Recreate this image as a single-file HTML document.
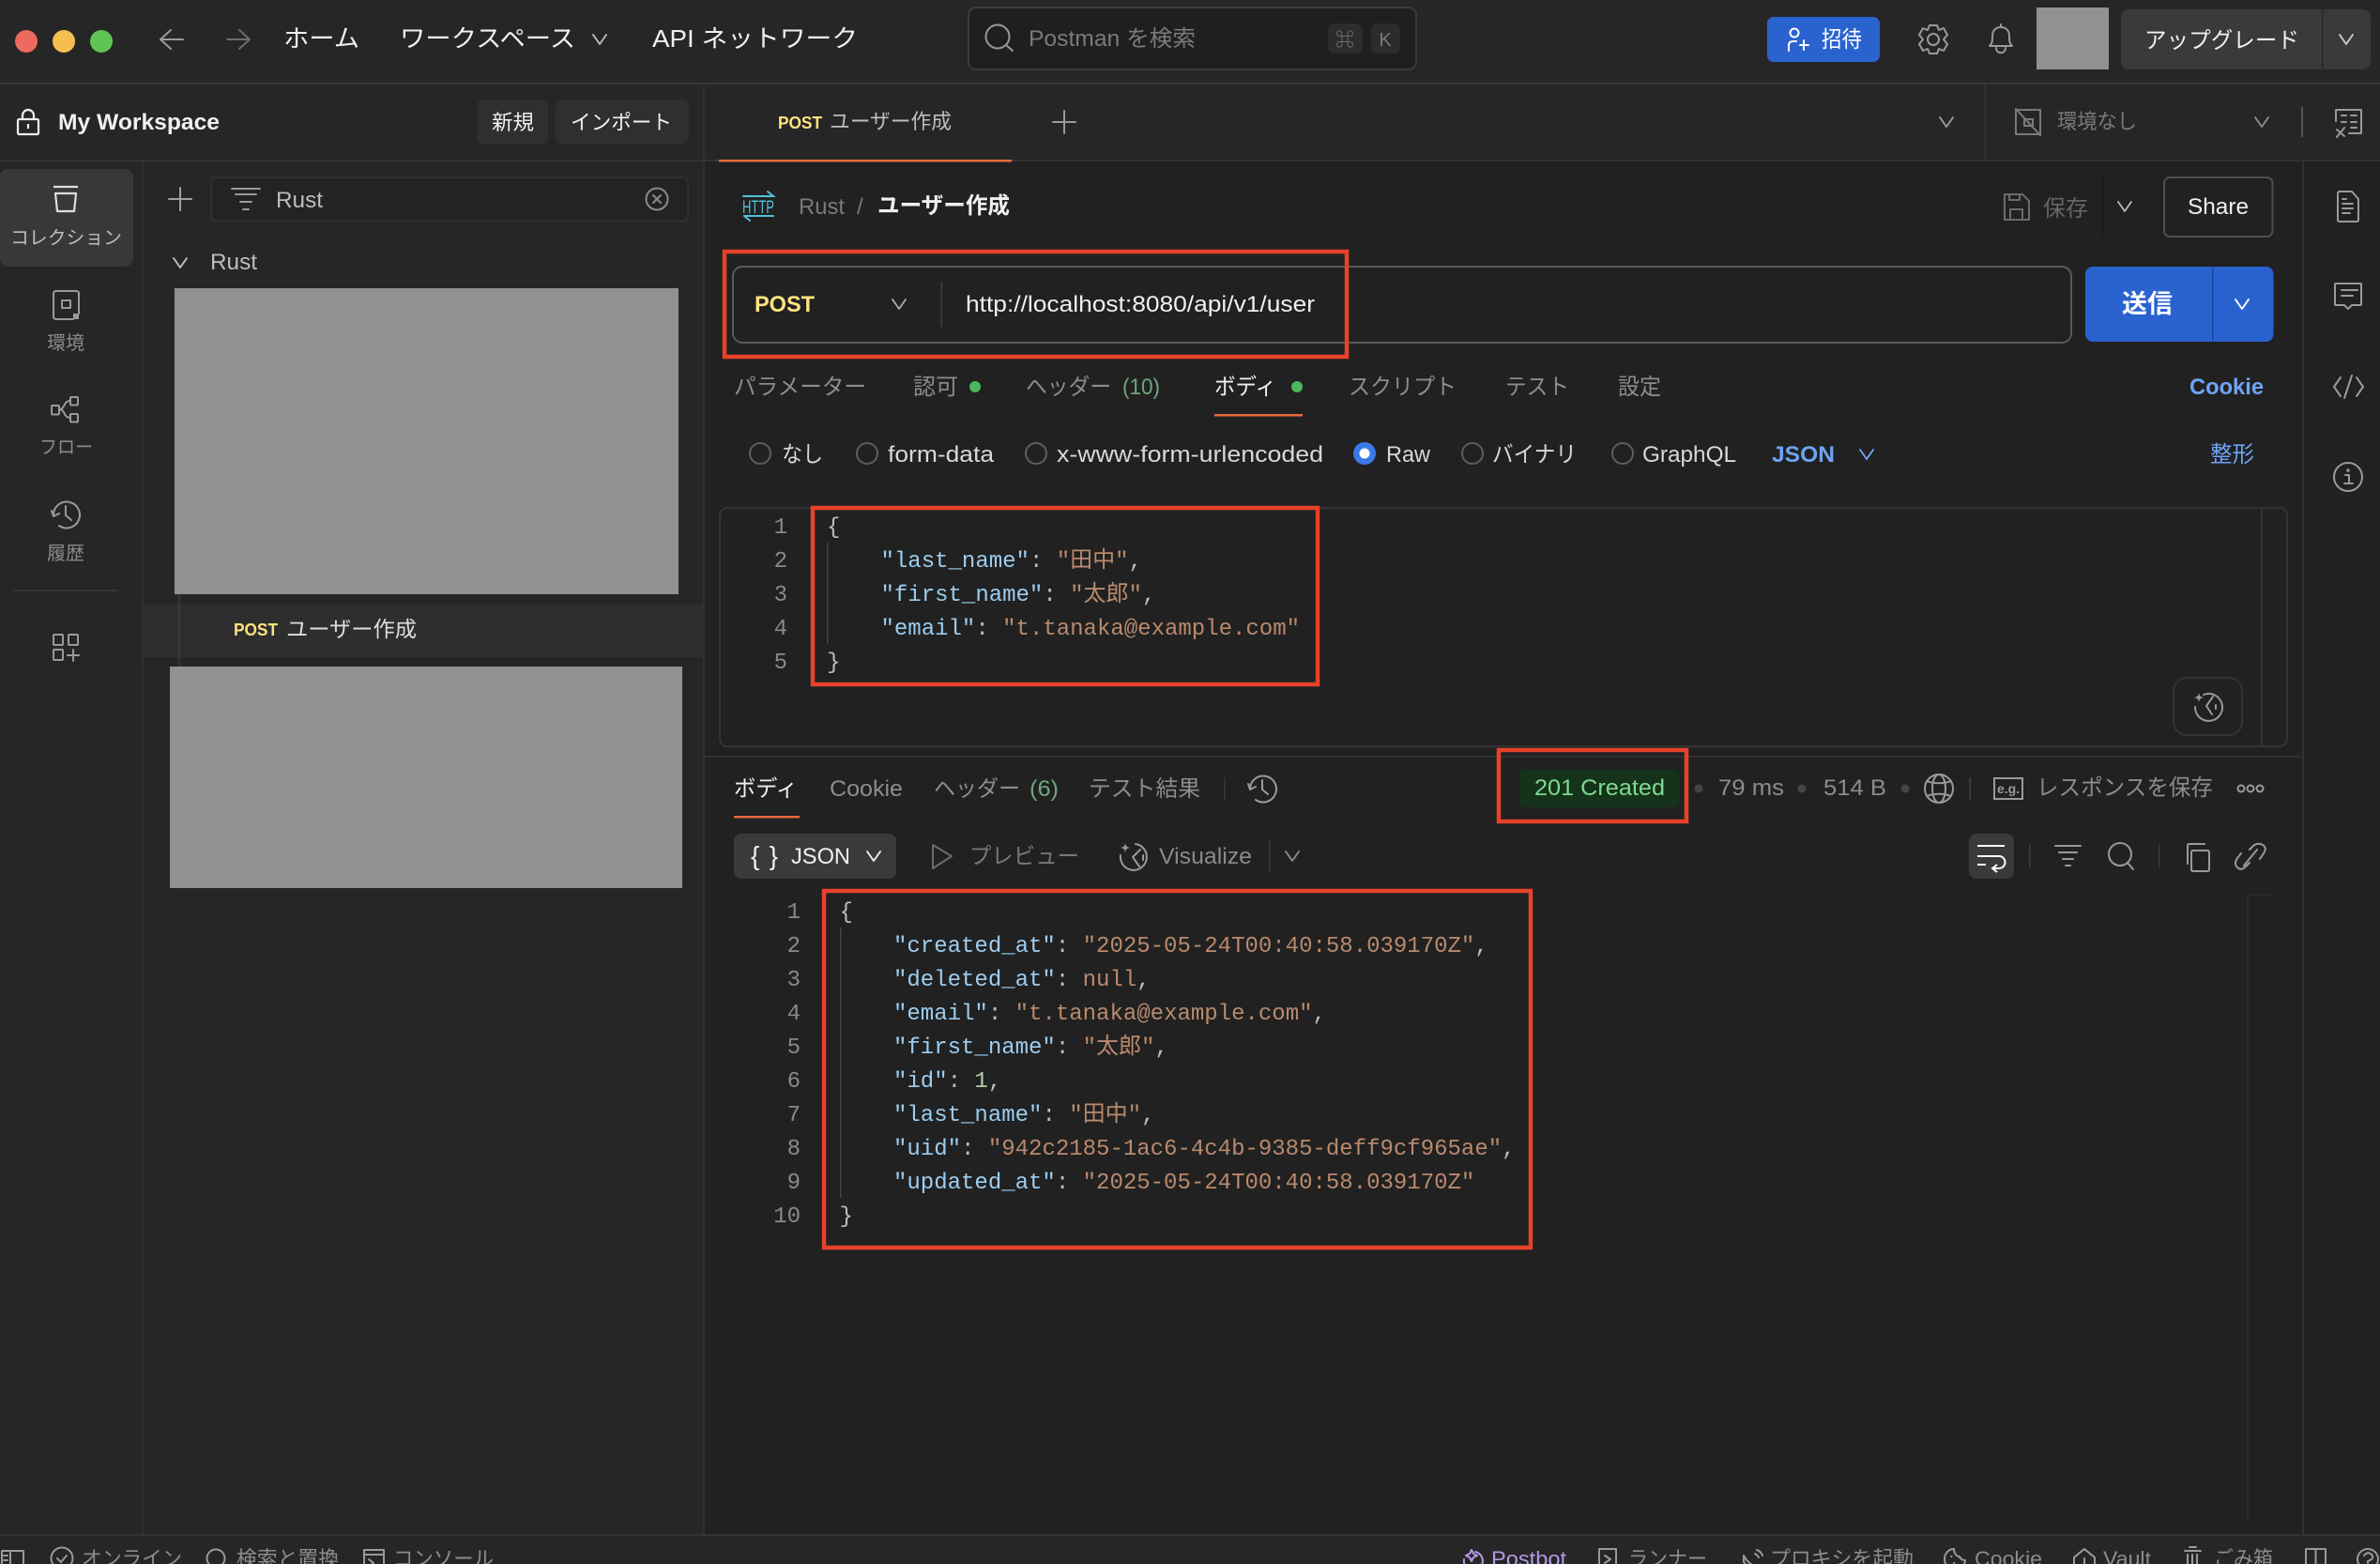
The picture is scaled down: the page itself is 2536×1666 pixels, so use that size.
<!DOCTYPE html>
<html lang="ja">
<head>
<meta charset="utf-8">
<title>Postman</title>
<style>
html,body{margin:0;padding:0;background:#212121;width:2536px;height:1666px;overflow:hidden}
svg{display:block}
text{font-family:"Liberation Sans","Noto Sans CJK JP",sans-serif;font-size:24px;fill:#8c8c8c;white-space:pre}
.w{fill:#f0f0f0}
.b{font-weight:700}
.y{fill:#ffe47e;font-weight:700}
.bl{fill:#6ea4f5;font-weight:700}
.gr{fill:#6fa67e}
.d{fill:#7a7a7a}
.m{font-family:"Liberation Mono","Noto Sans CJK JP",monospace}
.k{fill:#9ccdf0}
.s{fill:#b98a6d}
.p{fill:#bdbdbd}
.n{fill:#8a8a8a}
.i{fill:none;stroke:#9a9a9a;stroke-width:2;stroke-linecap:round;stroke-linejoin:round}
.i2{fill:none;stroke:#6c6c6c;stroke-width:2;stroke-linecap:round;stroke-linejoin:round}
.red{fill:none;stroke:#e8412a;stroke-width:4.5}
</style>
</head>
<body>
<svg xmlns="http://www.w3.org/2000/svg" width="2536" height="1666" viewBox="0 0 2536 1666">
<defs><path id="c" d="M-7-5L0 5L7-5" fill="none" stroke-width="1.9" stroke-linecap="round" stroke-linejoin="round"/></defs>

<!-- backgrounds -->
<rect width="2536" height="1666" fill="#212121"/>
<rect width="2536" height="172" fill="#262626"/>
<rect x="0" y="172" width="750" height="1462" fill="#262626"/>
<rect x="0" y="1634" width="2536" height="32" fill="#262626"/>
<rect y="88" width="2536" height="2" fill="#383838"/>
<rect y="170" width="2536" height="2" fill="#333"/>
<rect x="749" y="90" width="2" height="1544" fill="#303030"/>
<rect x="151" y="172" width="2" height="1462" fill="#2f2f2f"/>
<rect x="2453" y="172" width="2" height="1462" fill="#303030"/>
<rect y="1634" width="2536" height="2" fill="#333"/>

<!-- title bar -->
<circle cx="28" cy="44" r="12" fill="#ed6a5e"/>
<circle cx="68" cy="44" r="12" fill="#f5bf4f"/>
<circle cx="108" cy="44" r="12" fill="#61c554"/>
<path class="i" d="M171 42H195M182 32L171 42L182 52"/>
<path class="i2" d="M242 42H266M255 32L266 42L255 52"/>
<text class="w" x="302" y="50" style="font-size:26px" textLength="81" lengthAdjust="spacingAndGlyphs">ホーム</text>
<text class="w" x="426" y="50" style="font-size:26px" textLength="187" lengthAdjust="spacingAndGlyphs">ワークスペース</text>
<use href="#c" x="639" y="42" stroke="#bbb"/>
<text class="w" x="695" y="50" style="font-size:26px" textLength="219" lengthAdjust="spacingAndGlyphs">API ネットワーク</text>

<rect x="1032" y="8" width="477" height="66" rx="8" fill="#1f1f1f" stroke="#3b3b3b" stroke-width="2"/>
<circle cx="1063" cy="39" r="12.5" class="i"/>
<path class="i" d="M1072 48L1079 54"/>
<text x="1096" y="49" textLength="178" lengthAdjust="spacingAndGlyphs" class="d">Postman を検索</text>
<rect x="1415" y="25" width="37" height="32" rx="7" fill="#2c2c2c"/>
<rect x="1461" y="25" width="31" height="32" rx="7" fill="#2c2c2c"/>
<text x="1433" y="49" text-anchor="middle" class="d" style="font-size:20px">⌘</text>
<text x="1476" y="49" text-anchor="middle" class="d" style="font-size:20px">K</text>

<rect x="1883" y="18" width="120" height="48" rx="7" fill="#2a63d0"/>
<g fill="none" stroke="#fff" stroke-width="2" stroke-linecap="round"><circle cx="1912" cy="35" r="4.500"/><path d="M1906 54V48q0-4 5-4h3M1918 48h9M1922 43v10"/></g>
<text x="1941" y="50" style="fill:#fff" textLength="43" lengthAdjust="spacingAndGlyphs">招待</text>
<g class="i"><circle cx="2060" cy="42" r="6"/><path d="M2056 27h8l2 5 5-2 4 7-4 5 4 5-4 7-5-2-2 5h-8l-2-5-5 2-4-7 4-5-4-5 4-7 5 2z"/></g>
<path class="i" d="M2120 49c3-3 3-6 3-10 0-6 3-10 9-10s9 4 9 10c0 4 0 7 3 10zM2132 29v-3M2127 51c0 7 10 7 10 0"/>
<rect x="2170" y="8" width="77" height="66" fill="#919191"/>
<rect x="2260" y="10" width="266" height="64" rx="8" fill="#3a3a3a"/>
<rect x="2474" y="10" width="1.500" height="64" fill="#262626"/>
<text class="w" x="2285" y="51" textLength="165" lengthAdjust="spacingAndGlyphs">アップグレード</text>
<use href="#c" x="2500" y="42" stroke="#ccc"/>

<!-- workspace row -->
<g fill="none" stroke="#eee" stroke-width="2.200" stroke-linejoin="round"><rect x="19" y="127" width="22" height="16" rx="1.500"/><path d="M24 127v-4a6 6 0 0 1 12 0v4M30 132v5"/></g>
<text class="w b" x="62" y="138" textLength="172" lengthAdjust="spacingAndGlyphs">My Workspace</text>
<rect x="508" y="106" width="76" height="48" rx="8" fill="#2f2f2f"/>
<rect x="592" y="106" width="142" height="48" rx="8" fill="#2f2f2f"/>
<text class="w" x="524" y="138" style="font-size:22px" textLength="45" lengthAdjust="spacingAndGlyphs">新規</text>
<text class="w" x="608" y="138" style="font-size:22px" textLength="108" lengthAdjust="spacingAndGlyphs">インポート</text>

<!-- tabs row -->
<rect x="766" y="170" width="312" height="2.500" fill="#e8693f"/>
<text class="y" x="829" y="137" style="font-size:18px" textLength="47" lengthAdjust="spacingAndGlyphs">POST</text>
<text x="884" y="137" class="p" style="font-size:22px" textLength="130" lengthAdjust="spacingAndGlyphs">ユーザー作成</text>
<path class="i" d="M1134 118V142M1122 130H1146"/>
<use href="#c" x="2074" y="130" stroke="#9a9a9a"/>
<rect x="2114" y="90" width="2" height="80" fill="#303030"/>
<path class="i2" d="M2148 117h26v26h-26zM2148 116L2174 144" style="stroke:#7a7a7a"/><rect x="2157" y="127" width="9" height="7" fill="none" stroke="#7a7a7a" stroke-width="2"/>
<text x="2192" y="137" class="d" style="font-size:22px" textLength="85" lengthAdjust="spacingAndGlyphs">環境なし</text>
<use href="#c" x="2410" y="130" stroke="#8a8a8a"/>
<rect x="2452" y="114" width="2" height="32" fill="#555"/>
<path class="i" d="M2489 129V117h27v25h-13M2495 123h5M2505 123h6M2495 130h5M2505 130h6M2505 136h6M2490 138l8 7M2498 136l-8 10"/>

<!-- sidebar nav -->
<rect x="0" y="180" width="142" height="104" rx="9" fill="#383838"/>
<path d="M57 199H83M59 206L61 225H79L81 206Z" fill="none" stroke="#ddd" stroke-width="2.200" stroke-linejoin="round"/>
<text x="11" y="260" class="p" style="font-size:20px" textLength="119" lengthAdjust="spacingAndGlyphs">コレクション</text>
<path class="i" d="M78 340H60q-3 0-3-3V313q0-3 3-3h21q3 0 3 3v21"/><rect class="i" x="66" y="320" width="9" height="8"/><rect x="78" y="334" width="6" height="6" fill="#9a9a9a"/>
<text x="70" y="372" text-anchor="middle" class="n" style="font-size:20px">環境</text>
<g class="i"><rect x="55" y="432" width="8" height="9.500" rx="1"/><rect x="75" y="423" width="8" height="8.500" rx="1"/><rect x="75" y="441" width="8" height="8.500" rx="1"/><path d="M63 436c7 0 4-9 12-9M63 436c7 0 4 9 12 9"/></g>
<text x="42" y="483" class="n" style="font-size:20px" textLength="57" lengthAdjust="spacingAndGlyphs">フロー</text>
<g class="i"><path d="M57 549A14 14 0 1 1 63 560"/><path d="M55 544l2 6 6-3M70 539v10l6 5"/></g>
<text x="70" y="596" text-anchor="middle" class="n" style="font-size:20px">履歴</text>
<rect x="14" y="628" width="112" height="2" fill="#333"/>
<g class="i"><rect x="57" y="676" width="10" height="11" rx="1"/><rect x="73" y="676" width="10" height="11" rx="1"/><rect x="57" y="692" width="10" height="11" rx="1"/><path d="M72 698h12M78 692v12"/></g>

<!-- sidebar tree -->
<path class="i" d="M192 200V224M180 212H204" style="stroke:#a0a0a0"/>
<rect x="225" y="189" width="508" height="46" rx="4" fill="#232323" stroke="#303030" stroke-width="2"/>
<path class="i" d="M247 201H277M251 207H273M256 215H268M259 223H265"/>
<text x="294" y="221" class="p" textLength="50" lengthAdjust="spacingAndGlyphs">Rust</text>
<circle class="i" cx="700" cy="212" r="11.500" style="stroke:#8a8a8a"/><path class="i" d="M696 208L704 216M704 208L696 216" style="stroke:#8a8a8a"/>
<use href="#c" x="192" y="280" stroke="#c0c0c0"/>
<text x="224" y="287" class="p" textLength="50" lengthAdjust="spacingAndGlyphs">Rust</text>
<rect x="186" y="307" width="537" height="326" fill="#919191"/>
<rect x="190" y="633" width="1.500" height="80" fill="#3a3a3a"/>
<rect x="153" y="644" width="596" height="56" fill="#2e2e2e"/>
<rect x="190" y="644" width="1.500" height="56" fill="#3d3d3d"/>
<text class="y" x="249" y="677" style="font-size:18px" textLength="47" lengthAdjust="spacingAndGlyphs">POST</text>
<text x="305" y="678" style="fill:#dedede;font-size:23px" textLength="139" lengthAdjust="spacingAndGlyphs">ユーザー作成</text>
<rect x="181" y="710" width="546" height="236" fill="#919191"/>

<!-- breadcrumb -->
<g fill="none" stroke="#4fc3d9" stroke-width="2" stroke-linecap="round"><path d="M792 209H824L818 204M793 230H824M793 230l6 5"/></g>
<text x="791" y="227" style="fill:#4fc3d9;font-size:19px" textLength="34" lengthAdjust="spacingAndGlyphs">HTTP</text>
<text x="851" y="228" class="d" textLength="49" lengthAdjust="spacingAndGlyphs">Rust</text>
<text x="913" y="228" class="d">/</text>
<text class="w b" x="935" y="227" textLength="141" lengthAdjust="spacingAndGlyphs">ユーザー作成</text>
<g class="i2"><path d="M2136 207h19l7 7v20h-26zM2141 207v6h11v-6M2142 234v-11h13v11"/></g>
<text x="2177" y="230" style="fill:#666" textLength="48" lengthAdjust="spacingAndGlyphs">保存</text>
<rect x="2240" y="188" width="1.500" height="64" fill="#1a1a1a"/>
<use href="#c" x="2264" y="220" stroke="#b5b5b5"/>
<rect x="2306" y="189" width="115.500" height="63" rx="6" fill="none" stroke="#4f4f4f" stroke-width="2"/>
<text class="w" x="2331" y="228" textLength="65" lengthAdjust="spacingAndGlyphs">Share</text>
<path class="i" d="M2493 204h13l7 8v22q0 2-2 2h-18q-2 0-2-2v-28q0-2 2-2zM2496 212h4M2496 217h11M2496 222h11M2496 227h8"/>
<path class="i" d="M2489 302h26q1 0 1 1v21q0 1-1 1h-9l-4 4-4-4h-9q-1 0-1-1v-21q0-1 1-1zM2495 309h17M2495 315h12"/>
<path class="i" d="M2494 402l-7 10 7 10M2511 402l7 10-7 10M2506 400l-8 24"/>
<circle class="i" cx="2502" cy="508" r="15"/><path class="i" d="M2499 506h4v8M2498 515h9"/><circle cx="2502" cy="501" r="1.800" fill="#9a9a9a"/>

<!-- URL bar -->
<rect x="781" y="284" width="1426" height="81" rx="10" fill="none" stroke="#5a5a5a" stroke-width="2"/>
<text class="y" x="804" y="332" textLength="64" lengthAdjust="spacingAndGlyphs">POST</text>
<use href="#c" x="958" y="324" stroke="#a8a8a8"/>
<rect x="1002.500" y="300" width="1.500" height="48" fill="#3f3f3f"/>
<text class="w" x="1029" y="332" textLength="372" lengthAdjust="spacingAndGlyphs">http://localhost:8080/api/v1/user</text>
<rect x="2222" y="284" width="200.500" height="80" rx="8" fill="#2a63d0"/>
<rect x="2357" y="284" width="1.500" height="80" fill="#1d4494"/>
<text x="2288" y="333" text-anchor="middle" style="fill:#fff;font-size:27px;font-weight:700">送信</text>
<use href="#c" x="2389" y="324" stroke="#fff"/>

<!-- request tabs -->
<text x="782" y="420" textLength="141" lengthAdjust="spacingAndGlyphs">パラメーター</text>
<text x="973" y="420" textLength="48" lengthAdjust="spacingAndGlyphs">認可</text>
<circle cx="1039" cy="412" r="6" fill="#4cb75c"/>
<text x="1093" y="420" textLength="91" lengthAdjust="spacingAndGlyphs">ヘッダー</text>
<text x="1196" y="420" class="gr" textLength="40" lengthAdjust="spacingAndGlyphs">(10)</text>
<text class="w" x="1294" y="420" textLength="66" lengthAdjust="spacingAndGlyphs">ボディ</text>
<circle cx="1382" cy="412" r="6" fill="#4cb75c"/>
<rect x="1294" y="441" width="94" height="2.500" fill="#e8693f"/>
<text x="1437" y="420" textLength="115" lengthAdjust="spacingAndGlyphs">スクリプト</text>
<text x="1604" y="420" textLength="68" lengthAdjust="spacingAndGlyphs">テスト</text>
<text x="1724" y="420" textLength="46" lengthAdjust="spacingAndGlyphs">設定</text>
<text class="bl" x="2333" y="420" textLength="79" lengthAdjust="spacingAndGlyphs">Cookie</text>

<!-- radios -->
<g fill="none" stroke="#5e5e5e" stroke-width="2"><circle cx="810" cy="483" r="11"/><circle cx="924" cy="483" r="11"/><circle cx="1104" cy="483" r="11"/><circle cx="1569" cy="483" r="11"/><circle cx="1729" cy="483" r="11"/></g>
<circle cx="1454" cy="483" r="12" fill="#3b78e7"/><circle cx="1454" cy="483" r="5.500" fill="#fff"/>
<text style="fill:#d8d8d8" x="833" y="492" textLength="44" lengthAdjust="spacingAndGlyphs">なし</text>
<text style="fill:#d8d8d8" x="946" y="492" textLength="113" lengthAdjust="spacingAndGlyphs">form-data</text>
<text style="fill:#d8d8d8" x="1126" y="492" textLength="284" lengthAdjust="spacingAndGlyphs">x-www-form-urlencoded</text>
<text style="fill:#d8d8d8" x="1477" y="492" textLength="47" lengthAdjust="spacingAndGlyphs">Raw</text>
<text style="fill:#d8d8d8" x="1590" y="492" textLength="90" lengthAdjust="spacingAndGlyphs">バイナリ</text>
<text style="fill:#d8d8d8" x="1750" y="492" textLength="100" lengthAdjust="spacingAndGlyphs">GraphQL</text>
<text class="bl" x="1888" y="492" textLength="67" lengthAdjust="spacingAndGlyphs">JSON</text>
<use href="#c" x="1989" y="484" stroke="#6ea4f5"/>
<text class="bl" x="2355" y="492" style="font-weight:400" textLength="47" lengthAdjust="spacingAndGlyphs">整形</text>

<!-- request editor -->
<rect x="767" y="541" width="1670" height="254" rx="8" fill="none" stroke="#333" stroke-width="2"/>
<rect x="2409" y="541" width="1.500" height="254" fill="#3a3a3a"/>
<rect x="2316" y="722" width="73" height="61" rx="14" fill="none" stroke="#333" stroke-width="2"/>
<g class="i"><path d="M2348 740a14.500 14.500 0 1 1-9 13"/><path d="M2358 742l-7 10 6 9M2361 751v4"/><path d="M2343 737c0 4 2 6 6 6-4 0-6 2-6 6 0-4-2-6-6-6 4 0 6-2 6-6z" style="stroke:none;fill:#9a9a9a"/></g>
<rect x="881" y="578" width="1.500" height="108" fill="#444"/>
<text class="m n" x="839" y="568" text-anchor="end">1</text>
<text class="m n" x="839" y="604" text-anchor="end">2</text>
<text class="m n" x="839" y="640" text-anchor="end">3</text>
<text class="m n" x="839" y="676" text-anchor="end">4</text>
<text class="m n" x="839" y="712" text-anchor="end">5</text>
<text class="m p" x="881" y="568">{</text>
<text class="m" x="938.500" y="604"><tspan class="k">"last_name"</tspan><tspan class="p">: </tspan><tspan class="s">"田中"</tspan><tspan class="p">,</tspan></text>
<text class="m" x="938.500" y="640"><tspan class="k">"first_name"</tspan><tspan class="p">: </tspan><tspan class="s">"太郎"</tspan><tspan class="p">,</tspan></text>
<text class="m" x="938.500" y="676"><tspan class="k">"email"</tspan><tspan class="p">: </tspan><tspan class="s">"t.tanaka@example.com"</tspan></text>
<text class="m p" x="881" y="712">}</text>

<!-- response header -->
<rect x="751" y="805" width="1702" height="2" fill="#303030"/>
<text class="w" x="782" y="848" textLength="68" lengthAdjust="spacingAndGlyphs">ボディ</text>
<rect x="782" y="869" width="70" height="2.500" fill="#e8693f"/>
<text x="884" y="848" textLength="78" lengthAdjust="spacingAndGlyphs">Cookie</text>
<text x="995" y="848" textLength="92" lengthAdjust="spacingAndGlyphs">ヘッダー</text>
<text x="1097" y="848" class="gr" textLength="31" lengthAdjust="spacingAndGlyphs">(6)</text>
<text x="1160" y="848" textLength="119" lengthAdjust="spacingAndGlyphs">テスト結果</text>
<rect x="1304" y="828" width="1.500" height="24" fill="#383838"/>
<g class="i"><path d="M1332 840A14 14 0 1 1 1338 852"/><path d="M1330 835l2 6 6-3M1345 831v10l6 5"/></g>

<rect x="1619" y="820" width="171" height="40" rx="7" fill="#15331a"/>
<text x="1635" y="847" style="fill:#7fd992" textLength="139" lengthAdjust="spacingAndGlyphs">201 Created</text>
<circle cx="1810" cy="840" r="4.500" fill="#444"/>
<text x="1831" y="847" textLength="70" lengthAdjust="spacingAndGlyphs">79 ms</text>
<circle cx="1920" cy="840" r="4.500" fill="#444"/>
<text x="1943" y="847" textLength="67" lengthAdjust="spacingAndGlyphs">514 B</text>
<circle cx="2030" cy="840" r="4.500" fill="#444"/>
<g class="i"><circle cx="2066" cy="840" r="15"/><ellipse cx="2066" cy="840" rx="7" ry="15"/><path d="M2053 832c8 3 18 3 26 0M2053 848c8-3 18-3 26 0"/></g>
<rect x="2098.500" y="828" width="1.500" height="24" fill="#444"/>
<rect x="2125" y="829" width="30" height="22" fill="none" stroke="#9a9a9a" stroke-width="2"/>
<text x="2140" y="845" text-anchor="middle" style="font-size:14px;font-weight:700;fill:#9a9a9a">e.g.</text>
<text x="2170" y="847" textLength="188" lengthAdjust="spacingAndGlyphs">レスポンスを保存</text>
<g class="i"><circle cx="2388" cy="840" r="3.500"/><circle cx="2398" cy="840" r="3.500"/><circle cx="2408" cy="840" r="3.500"/></g>

<!-- response toolbar -->
<rect x="782" y="888" width="173" height="48" rx="8" fill="#3a3a3a"/>
<text x="800" y="921" class="w" style="font-size:28px" textLength="29" lengthAdjust="spacing">{}</text>
<text class="w" x="843" y="920" textLength="63" lengthAdjust="spacingAndGlyphs">JSON</text>
<use href="#c" x="931" y="912" stroke="#eee"/>
<path class="i2" d="M994 900L1014 912L994 925Z"/>
<text x="1033" y="920" style="fill:#777" textLength="117" lengthAdjust="spacingAndGlyphs">プレビュー</text>
<g class="i"><path d="M1210 899a14 14 0 1 1-16 12"/><path d="M1215 905l-8 8 7 10M1218 911v5"/><path d="M1199 897c0 4 2 6 6 6-4 0-6 2-6 6 0-4-2-6-6-6 4 0 6-2 6-6z" style="stroke:none;fill:#9a9a9a"/></g>
<text x="1235" y="920" class="n" textLength="99" lengthAdjust="spacingAndGlyphs">Visualize</text>
<rect x="1352" y="896" width="1.500" height="32" fill="#3a3a3a"/>
<use href="#c" x="1377" y="912" stroke="#8a8a8a"/>

<rect x="2098" y="888" width="48" height="48" rx="8" fill="#3a3a3a"/>
<path d="M2107 901H2136M2107 912H2130a6 6 0 0 1 0 13H2124M2128 921l-5 4 5 4M2107 921H2116" fill="none" stroke="#fff" stroke-width="2"/>
<rect x="2162" y="900" width="1.500" height="24" fill="#3d3d3d"/>
<path class="i" d="M2190 901H2217M2194 908H2213M2198 915H2209M2201 922H2206"/>
<circle class="i" cx="2259" cy="910" r="12"/><path class="i" d="M2267 919L2273 926"/>
<rect x="2300" y="900" width="1.500" height="24" fill="#3d3d3d"/>
<path class="i" d="M2331 920V901q0-2 2-2h16M2337 906h15q2 0 2 2v18q0 2-2 2h-15q-2 0-2-2v-18q0-2 2-2z"/>
<path class="i" d="M2397 905l4-4q5-4 10-1t1 9l-4 6M2397 919l-4 4q-5 5-9 1t0-10l4-5M2391 922l14-17"/>
<path d="M2422 953H2395V1620" fill="none" stroke="#2d2d2d" stroke-width="1.500"/>

<!-- response code -->
<text class="m n" x="853" y="978" text-anchor="end">1</text>
<text class="m n" x="853" y="1014" text-anchor="end">2</text>
<text class="m n" x="853" y="1050" text-anchor="end">3</text>
<text class="m n" x="853" y="1086" text-anchor="end">4</text>
<text class="m n" x="853" y="1122" text-anchor="end">5</text>
<text class="m n" x="853" y="1158" text-anchor="end">6</text>
<text class="m n" x="853" y="1194" text-anchor="end">7</text>
<text class="m n" x="853" y="1230" text-anchor="end">8</text>
<text class="m n" x="853" y="1266" text-anchor="end">9</text>
<text class="m n" x="853" y="1302" text-anchor="end">10</text>
<rect x="895" y="988" width="1.500" height="288" fill="#444"/>
<text class="m p" x="894.500" y="978">{</text>
<text class="m" x="952" y="1014"><tspan class="k">"created_at"</tspan><tspan class="p">: </tspan><tspan class="s">"2025-05-24T00:40:58.039170Z"</tspan><tspan class="p">,</tspan></text>
<text class="m" x="952" y="1050"><tspan class="k">"deleted_at"</tspan><tspan class="p">: </tspan><tspan class="s">null</tspan><tspan class="p">,</tspan></text>
<text class="m" x="952" y="1086"><tspan class="k">"email"</tspan><tspan class="p">: </tspan><tspan class="s">"t.tanaka@example.com"</tspan><tspan class="p">,</tspan></text>
<text class="m" x="952" y="1122"><tspan class="k">"first_name"</tspan><tspan class="p">: </tspan><tspan class="s">"太郎"</tspan><tspan class="p">,</tspan></text>
<text class="m" x="952" y="1158"><tspan class="k">"id"</tspan><tspan class="p">: </tspan><tspan style="fill:#b5cea8">1</tspan><tspan class="p">,</tspan></text>
<text class="m" x="952" y="1194"><tspan class="k">"last_name"</tspan><tspan class="p">: </tspan><tspan class="s">"田中"</tspan><tspan class="p">,</tspan></text>
<text class="m" x="952" y="1230"><tspan class="k">"uid"</tspan><tspan class="p">: </tspan><tspan class="s">"942c2185-1ac6-4c4b-9385-deff9cf965ae"</tspan><tspan class="p">,</tspan></text>
<text class="m" x="952" y="1266"><tspan class="k">"updated_at"</tspan><tspan class="p">: </tspan><tspan class="s">"2025-05-24T00:40:58.039170Z"</tspan></text>
<text class="m p" x="894.500" y="1302">}</text>

<!-- status bar -->
<g class="i"><path d="M2 1652h23v20H2zM11 1652v20M4 1657h4M4 1662h4M4 1667h4"/>
<circle cx="66" cy="1660" r="11.500"/><path d="M61 1660l4 4 6-7"/>
<circle cx="230" cy="1660" r="9.500"/>
<path d="M388 1651h21v20h-21zM388 1656h21M393 1661l5 4-5 4"/>
<path d="M1568 1651l2 4 4 2-4 2-2 4-2-4-4-2 4-2zM1572 1653a10 10 0 1 1-12 8" style="stroke:#b49ae6"/>
<path d="M1704 1650h18v22h-18zM1710 1657l6 4-6 4"/>
<path d="M1858 1657c3 6 8 10 14 13l-5 4-9-10zM1872 1651c3 1 5 3 6 6M1870 1655c2 1 3 2 4 4"/>
<path d="M2082 1650c-6 0-10 5-10 11s5 11 11 11 11-5 11-10c-3 0-5-1-6-4-3 0-6-3-6-8zM2079 1658h.5M2082 1665h.5"/>
<path d="M2221 1650l11 9v13h-22v-13zM2221 1660v6"/>
<path d="M2328 1652h17M2333 1648h7M2331 1656v16M2336 1656v16M2341 1656v16"/>
<path d="M2457 1650h21v22h-21zM2467.500 1650v22"/>
<circle cx="2523" cy="1661" r="11"/><path d="M2519 1657q4-5 8-1t-4 7v2"/></g>
<text x="87" y="1668" style="font-size:22px" textLength="107" lengthAdjust="spacingAndGlyphs">オンライン</text>
<text x="252" y="1668" style="font-size:22px" textLength="109" lengthAdjust="spacingAndGlyphs">検索と置換</text>
<text x="419" y="1668" style="font-size:22px" textLength="107" lengthAdjust="spacingAndGlyphs">コンソール</text>
<text x="1589" y="1668" style="font-size:22px;fill:#b49ae6" textLength="80" lengthAdjust="spacingAndGlyphs">Postbot</text>
<text x="1735" y="1668" style="font-size:22px" textLength="84" lengthAdjust="spacingAndGlyphs">ランナー</text>
<text x="1886" y="1668" style="font-size:22px" textLength="153" lengthAdjust="spacingAndGlyphs">プロキシを起動</text>
<text x="2104" y="1668" style="font-size:22px" textLength="72" lengthAdjust="spacingAndGlyphs">Cookie</text>
<text x="2241" y="1668" style="font-size:22px" textLength="51" lengthAdjust="spacingAndGlyphs">Vault</text>
<text x="2359" y="1668" style="font-size:22px" textLength="63" lengthAdjust="spacingAndGlyphs">ごみ箱</text>

<!-- red annotations -->
<rect class="red" x="772" y="268" width="663" height="112"/>
<rect class="red" x="866" y="541" width="538" height="188"/>
<rect class="red" x="1597" y="799" width="200" height="76"/>
<rect class="red" x="878" y="949" width="753" height="380"/>
</svg>
</body>
</html>
